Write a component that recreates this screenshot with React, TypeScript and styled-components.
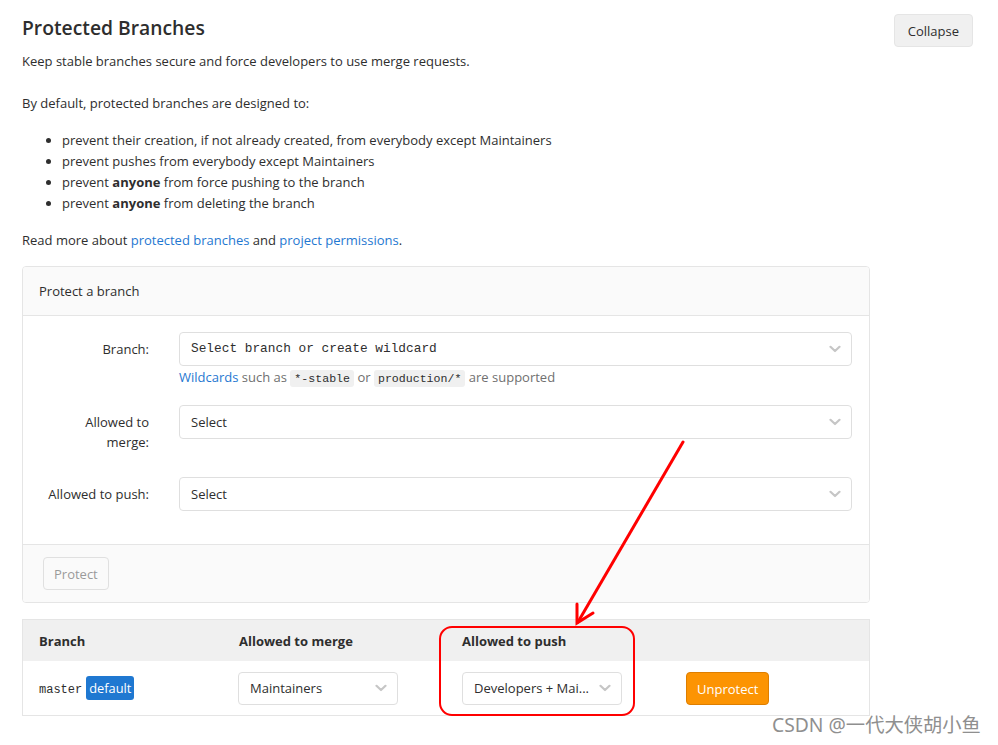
import React from "react";
import styled, { createGlobalStyle } from "styled-components";

const GlobalStyle = createGlobalStyle`
  html, body { margin: 0; padding: 0; background: #fff; }
  body {
    font-family: "Open Sans", "Noto Sans", sans-serif;
    font-size: 13px;
    line-height: 20px;
    color: #2e2e2e;
  }
  * { box-sizing: border-box; }
`;

const Page = styled.div`
  position: relative;
  width: 998px;
  height: 745px;
  overflow: hidden;
  padding: 14px 25px 0 22px;
`;

const HeaderRow = styled.div`
  display: flex;
  justify-content: space-between;
  align-items: flex-start;
`;

const Title = styled.h3`
  margin: 0;
  font-size: 19.3px;
  font-weight: 600;
  line-height: 28px;
  color: #2e2e2e;
`;

const Button = styled.button<{ $variant?: "default" | "disabled" | "warning" }>`
  font-family: inherit;
  font-size: 13px;
  line-height: 20px;
  border-radius: 4px;
  padding: 6px ${(p) => (p.$variant ? 10 : 13)}px;
  height: 33px;
  border: 1px solid
    ${(p) => (p.$variant === "warning" ? "#de7e00" : p.$variant === "disabled" ? "#e0e0e0" : "#e5e5e5")};
  background: ${(p) => (p.$variant === "warning" ? "#fc9403" : p.$variant === "disabled" ? "#fafafa" : "#f0f0f0")};
  color: ${(p) => (p.$variant === "warning" ? "#fff" : p.$variant === "disabled" ? "#9a9a9a" : "#2e2e2e")};
`;

const Content = styled.div`
  width: 848px;
`;

const Para = styled.p<{ $mt: number }>`
  margin: ${(p) => p.$mt}px 0 0 0;
  line-height: 21px;
`;

const List = styled.ul`
  margin: 16px 0 0 0;
  padding-left: 40px;
  line-height: 21px;
`;

const Link = styled.a`
  color: #1f78d1;
  text-decoration: none;
`;

const Panel = styled.div`
  margin-top: 15px;
  border: 1px solid #e5e5e5;
  border-radius: 4px;
  overflow: hidden;
`;

const PanelHeader = styled.div`
  background: #fafafa;
  border-bottom: 1px solid #e5e5e5;
  padding: 14px 16px;
  height: 49px;
  line-height: 20px;
`;

const PanelBody = styled.div`
  padding: 16px 17px 31px 16px;
  display: flex;
  flex-direction: column;
  gap: 16px;
`;

const FormRow = styled.div`
  display: grid;
  grid-template-columns: 110px 1fr;
  column-gap: 30px;
`;

const Label = styled.label`
  text-align: right;
  padding: 7px 0 9px 0;
  line-height: 20px;
`;

const Field = styled.div`
  display: flex;
  flex-direction: column;
`;

const SelectBox = styled.div<{ $width?: number; $mono?: boolean; $h?: number }>`
  display: flex;
  align-items: center;
  justify-content: space-between;
  height: ${(p) => p.$h ?? 34}px;
  width: ${(p) => (p.$width ? `${p.$width}px` : "100%")};
  border: 1px solid #dfdfdf;
  border-radius: 4px;
  background: #fff;
  padding: 0 10px 0 11px;
  font-family: ${(p) => (p.$mono ? `"Liberation Mono", monospace` : "inherit")};
  font-size: ${(p) => (p.$mono ? "12.8px" : "13px")};
  color: #2e2e2e;
  white-space: nowrap;
`;

const Chevron = () => (
  <svg width="12" height="8" viewBox="0 0 12 8">
    <path d="M1.5 1.8 L6 6 L10.5 1.8" fill="none" stroke="#c6c6c6" strokeWidth="2.2" strokeLinecap="round" strokeLinejoin="round" />
  </svg>
);

const Help = styled.div`
  margin-top: 1px;
  line-height: 20px;
  color: #707070;
`;

const Code = styled.code`
  font-family: "Liberation Mono", monospace;
  font-size: 11.6px;
  background: #f0f0f0;
  color: #2e2e2e;
  border-radius: 3px;
  padding: 2px 4px;
`;

const PanelFooter = styled.div`
  background: #fafafa;
  border-top: 1px solid #e5e5e5;
  padding: 12px 20px 12px 20px;
  display: flex;
`;

const Table = styled.div`
  margin-top: 16px;
  border: 1px solid #e5e5e5;
`;

const TRow = styled.div<{ $head?: boolean }>`
  display: grid;
  grid-template-columns: 200px 223px 224px 1fr;
  align-items: center;
  height: ${(p) => (p.$head ? 41 : 54)}px;
  background: ${(p) => (p.$head ? "#f0f0f0" : "#fff")};
  font-weight: ${(p) => (p.$head ? 700 : 400)};
`;

const Cell = styled.div<{ $pl?: number }>`
  padding-left: ${(p) => p.$pl ?? 16}px;
  display: flex;
  align-items: center;
  gap: 4px;
`;

const Mono = styled.code`
  font-family: "Liberation Mono", monospace;
  font-size: 12px;
  color: #2e2e2e;
  padding-top: 3px;
`;

const Badge = styled.span`
  background: #1f78d1;
  color: #fff;
  border-radius: 3px;
  padding: 1px 3px;
  line-height: 22px;
  font-size: 12.8px;
`;

const Overlay = styled.svg`
  position: absolute;
  left: 0;
  top: 0;
  pointer-events: none;
`;

const Watermark = styled.div`
  position: absolute;
  left: 772px;
  top: 711px;
  font-family: "Noto Sans", "Noto Sans CJK SC", sans-serif;
  font-size: 19.3px;
  line-height: 28px;
  color: #8f8f8f;
  white-space: nowrap;
  text-shadow: 0 0 1px #fff;
`;

export default function App() {
  return (
    <>
      <GlobalStyle />
      <Page>
        <HeaderRow>
          <Title>Protected Branches</Title>
          <Button>Collapse</Button>
        </HeaderRow>
        <Content>
          <Para $mt={4}>Keep stable branches secure and force developers to use merge requests.</Para>
          <Para $mt={21}>By default, protected branches are designed to:</Para>
          <List>
            <li>prevent their creation, if not already created, from everybody except Maintainers</li>
            <li>prevent pushes from everybody except Maintainers</li>
            <li>
              prevent <strong>anyone</strong> from force pushing to the branch
            </li>
            <li>
              prevent <strong>anyone</strong> from deleting the branch
            </li>
          </List>
          <Para $mt={16}>
            Read more about <Link>protected branches</Link> and <Link>project permissions</Link>.
          </Para>

          <Panel>
            <PanelHeader>Protect a branch</PanelHeader>
            <PanelBody>
              <FormRow>
                <Label>Branch:</Label>
                <Field>
                  <SelectBox $mono>
                    <span>Select branch or create wildcard</span>
                    <Chevron />
                  </SelectBox>
                  <Help>
                    <Link>Wildcards</Link> such as <Code>*-stable</Code> or <Code>production/*</Code> are supported
                  </Help>
                </Field>
              </FormRow>
              <FormRow>
                <Label>
                  Allowed to
                  <br />
                  merge:
                </Label>
                <Field>
                  <SelectBox>
                    <span>Select</span>
                    <Chevron />
                  </SelectBox>
                </Field>
              </FormRow>
              <FormRow>
                <Label>Allowed to push:</Label>
                <Field>
                  <SelectBox>
                    <span>Select</span>
                    <Chevron />
                  </SelectBox>
                </Field>
              </FormRow>
            </PanelBody>
            <PanelFooter>
              <Button $variant="disabled">Protect</Button>
            </PanelFooter>
          </Panel>

          <Table>
            <TRow $head>
              <Cell>Branch</Cell>
              <Cell>Allowed to merge</Cell>
              <Cell>Allowed to push</Cell>
              <Cell />
            </TRow>
            <TRow>
              <Cell>
                <Mono>master</Mono>
                <Badge>default</Badge>
              </Cell>
              <Cell $pl={15}>
                <SelectBox $width={160} $h={33}>
                  <span>Maintainers</span>
                  <Chevron />
                </SelectBox>
              </Cell>
              <Cell>
                <SelectBox $width={160} $h={33}>
                  <span>Developers + Mai...</span>
                  <Chevron />
                </SelectBox>
              </Cell>
              <Cell>
                <Button $variant="warning">Unprotect</Button>
              </Cell>
            </TRow>
          </Table>
        </Content>

        <Overlay width="998" height="745" viewBox="0 0 998 745">
          <rect x="440" y="627" width="194" height="88" rx="12" ry="12" fill="none" stroke="#ff0000" strokeWidth="2" />
          <path d="M683 442 L578 622" stroke="#ff0000" strokeWidth="3" fill="none" strokeLinecap="round" />
          <path d="M577 604 L577 623 L593 613" stroke="#ff0000" strokeWidth="3" fill="none" strokeLinecap="round" strokeLinejoin="miter" />
        </Overlay>
        <Watermark>CSDN @一代大侠胡小鱼</Watermark>
      </Page>
    </>
  );
}
